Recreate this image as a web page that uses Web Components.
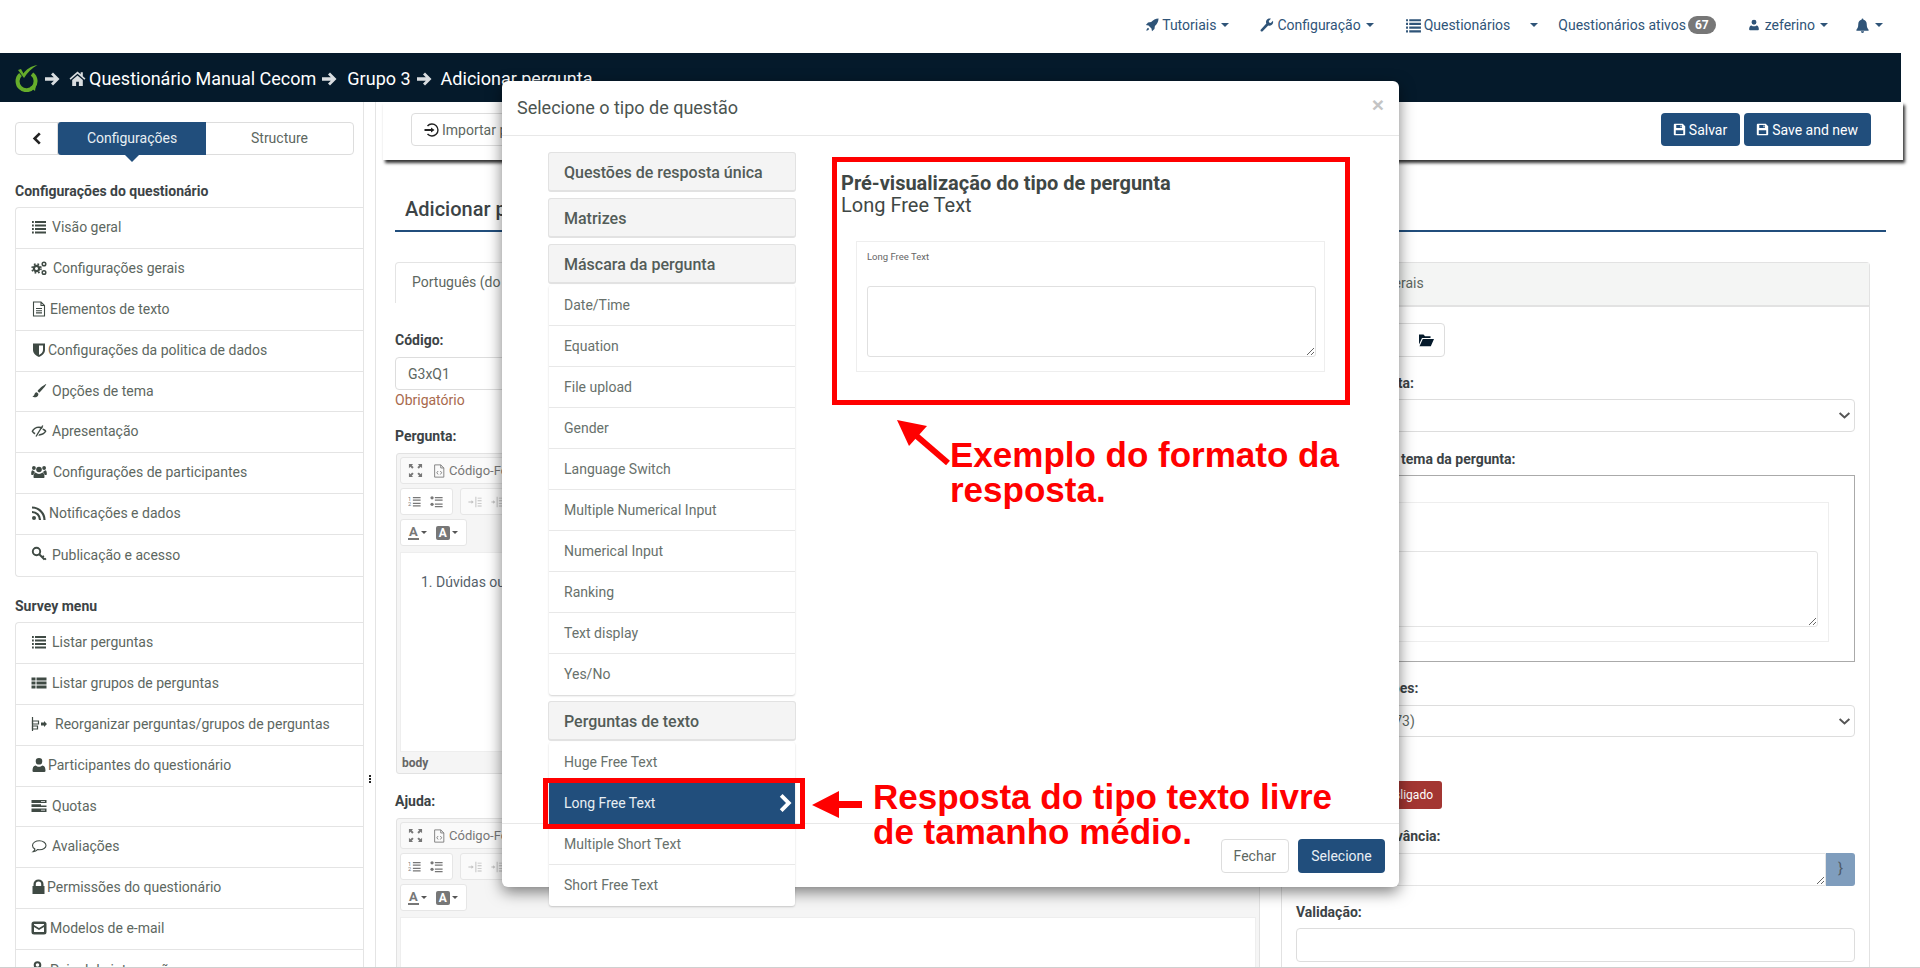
<!DOCTYPE html>
<html lang="pt"><head><meta charset="utf-8"><title>Adicionar pergunta</title>
<style>
html,body{margin:0;padding:0;background:#fff}
body{font:14px/20px Roboto,"Liberation Sans",sans-serif;color:#5d6761}
</style></head><body>
<app-shell>
  <top-nav>
    <nav-link icon="rocket" caret gap="0">Tutoriais</nav-link>
    <nav-link icon="wrench" caret gap="31">Configuração</nav-link>
    <nav-link icon="list" caret gap="31" cgap="20">Questionários</nav-link>
    <nav-link gap="20" badge="67">Questionários ativos</nav-link>
    <nav-link icon="user" caret gap="32">zeferino</nav-link>
    <nav-link icon="bell" caret gap="27"></nav-link>
  </top-nav>
  <crumb-bar></crumb-bar>
  <work-area>
    <side-nav slot="side">
      <menu-group heading="Configurações do questionário">
        <menu-row icon="list" tx="52">Visão geral</menu-row>
        <menu-row icon="cogs" tx="53">Configurações gerais</menu-row>
        <menu-row icon="file" tx="50">Elementos de texto</menu-row>
        <menu-row icon="shield" tx="48">Configurações da politica de dados</menu-row>
        <menu-row icon="brush" tx="52">Opções de tema</menu-row>
        <menu-row icon="eyeslash" tx="52">Apresentação</menu-row>
        <menu-row icon="users" tx="53">Configurações de participantes</menu-row>
        <menu-row icon="rss" tx="49">Notificações e dados</menu-row>
        <menu-row icon="key" tx="52">Publicação e acesso</menu-row>
      </menu-group>
      <menu-group heading="Survey menu">
        <menu-row icon="list" tx="52">Listar perguntas</menu-row>
        <menu-row icon="thlist" tx="52">Listar grupos de perguntas</menu-row>
        <menu-row icon="reorder" tx="55">Reorganizar perguntas/grupos de perguntas</menu-row>
        <menu-row icon="user" tx="48">Participantes do questionário</menu-row>
        <menu-row icon="quota" tx="52">Quotas</menu-row>
        <menu-row icon="comment" tx="52">Avaliações</menu-row>
        <menu-row icon="lock" tx="47">Permissões do questionário</menu-row>
        <menu-row icon="mailbox" tx="50">Modelos de e-mail</menu-row>
        <menu-row icon="pin" tx="50">Painel de integração</menu-row>
      </menu-group>
    </side-nav>
    <page-main slot="main">
      <form-left slot="left"></form-left>
      <form-right slot="right"></form-right>
    </page-main>
  </work-area>
  <type-dialog>
    <type-section title="Questões de resposta única"></type-section>
    <type-section title="Matrizes"></type-section>
    <type-section title="Máscara da pergunta">
      <type-item>Date/Time</type-item><type-item>Equation</type-item><type-item>File upload</type-item>
      <type-item>Gender</type-item><type-item>Language Switch</type-item><type-item>Multiple Numerical Input</type-item>
      <type-item>Numerical Input</type-item><type-item>Ranking</type-item><type-item>Text display</type-item><type-item>Yes/No</type-item>
    </type-section>
    <type-section title="Perguntas de texto">
      <type-item>Huge Free Text</type-item><type-item active>Long Free Text</type-item>
      <type-item>Multiple Short Text</type-item><type-item>Short Free Text</type-item>
    </type-section>
  </type-dialog>
  <note-layer></note-layer>
</app-shell>
<script>
const I={
rocket:'<path d="M15.5.5c-3.5.2-6.3 1.6-8.5 4.2L3.5 5.2 1 8l3 .6 3.4 3.4.6 3 2.8-2.5.5-3.5c2.6-2.2 4-5 4.2-8.5zM3.5 11.2c-1 .5-1.8 2-2 3.3 1.3-.2 2.8-1 3.3-2z"/>',
wrench:'<path d="M14.8 3.2 12.3 5.6 10.4 5.2 10 3.3 12.5.9C10.6.2 8.4.9 7.4 2.6 6.7 3.8 6.7 5.1 7.2 6.3L1 13c-.6.6-.6 1.4 0 2s1.4.6 2 0l6.4-6.5c1.2.5 2.6.4 3.7-.4 1.6-1 2.3-3 1.7-4.9z"/>',
list:'<path d="M1 2h1.8v2H1zM4 2h11v2H4zM1 5.5h1.8v2H1zM4 5.5h11v2H4zM1 9h1.8v2H1zM4 9h11v2H4zM1 12.5h1.8v2H1zM4 12.5h11v2H4z"/>',
thlist:'<path d="M.5 2.5h4v3h-4zM5.5 2.5h10v3h-10zM.5 6.500h4v3h-4zM5.5 6.500h10v3h-10zM.5 10.500h4v3h-4zM5.5 10.500h10v3h-10z"/>',
user:'<path d="M8 1a3.3 3.3 0 1 0 0 6.6A3.3 3.3 0 0 0 8 1zM2.5 15c-.8 0-1-.6-1-1.2 0-3 .9-5.3 3.2-5.3 1 .9 2 1.3 3.3 1.3s2.3-.4 3.3-1.3c2.3 0 3.2 2.3 3.2 5.3 0 .6-.2 1.2-1 1.2z"/>',
bell:'<path d="M8 .5c-.6 0-1 .4-1 1v.3C4.8 2.2 3.5 4 3.5 6.5c0 3.8-1 5-2 6v1h13v-1c-1-1-2-2.2-2-6 0-2.5-1.3-4.3-3.5-4.7v-.3c0-.6-.4-1-1-1zM6.3 14.2a1.7 1.7 0 0 0 3.4 0z"/>',
save:'<path fill-rule="evenodd" d="M2 1h10l3 3v10a1 1 0 0 1-1 1H2a1 1 0 0 1-1-1V2a1 1 0 0 1 1-1zm2 1.4V6h7V2.4zm5.2.6h1.2v2.2H9.2zM3.4 9v4.6h9.2V9z"/>',
home:'<path d="M8 1.5 .5 8l1 1.1L8 3.5l6.5 5.6 1-1.1L13 5.8V2h-2v2zM3 9.5V15h3.7v-4h2.6v4H13V9.5L8 5.2z"/>',
arrow:'<path d="M9 1.5 15.5 8 9 14.5 7 12.5 9.8 9.8H1V6.2h8.8L7 3.5z"/>',
chevl:'<path d="M10.5 1.5 12.5 3.5 8 8l4.500 4.500-2 2L4 8z"/>',
chevr:'<path d="M5.500 1.500 12 8l-6.500 6.500-2-2L8 8 3.500 3.500z"/>',
cogs:'<g fill="none" stroke="currentColor"><circle cx="5.500" cy="8.500" r="2.600" stroke-width="2.200"/><circle cx="5.500" cy="8.500" r="4.500" stroke-width="1.600" stroke-dasharray="1.700 1.900"/><circle cx="13" cy="4" r="1.800" stroke-width="1.500"/><circle cx="13" cy="12.500" r="1.800" stroke-width="1.500"/></g>',
file:'<g fill="none" stroke="currentColor" stroke-width="1.100"><path d="M2.500 1h7.500l3.500 3.500V15h-11zM10 1v3.500h3.500"/><path d="M5 7.500h6M5 9.700h6M5 11.900h6"/></g>',
shield:'<path fill-rule="evenodd" d="M2 1.500h12V8c0 3.500-3.500 6-6 7-2.500-1-6-3.500-6-7zM8 3.500V13c2-1 4-2.800 4-5V3.500z"/>',
brush:'<path d="M15.300 1c-2 .6-6.500 4-8.800 7l1.700 1.700C11 7 14.800 3 15.300 1zM5.800 9.200C4 9.400 3.500 10.800 3.200 12c-.2.8-.9 1.200-1.700 1.200 1 1.300 4 1.600 5.300-.2.700-1 .7-2 .4-2.400z"/>',
eyeslash:'<path d="M8 3.500C4.800 3.500 2 5.500.5 8.200c.7 1.300 1.700 2.400 3 3.200l1-1.300C3.400 9.600 2.700 9 2.200 8.200 3.400 6.400 5 5.200 7 5c1.500 0 2.800.3 3.800 1l1.200-1.500C10.800 3.800 9.500 3.500 8 3.500zM12.300 5.500l-1 1.200c1 .4 1.800 1 2.500 1.500C12.500 10 10.400 11 8.500 11l-1.300 1.600c3.400.4 6.700-1.600 8.300-4.400-.7-1.200-1.900-2.100-3.200-2.700z"/><path d="M11.800 2.500 5 13.500" stroke="currentColor" stroke-width="1.400"/>',
users:'<circle cx="8" cy="5.500" r="2.800"/><circle cx="2.900" cy="4" r="1.900"/><circle cx="13.100" cy="4" r="1.900"/><path d="M3.500 14c-.6 0-1-.4-1-1 0-2.200.8-4 2-4.400 1 .9 2.200 1.300 3.500 1.300s2.500-.4 3.500-1.300c1.200.4 2 2.200 2 4.400 0 .6-.4 1-1 1zM.2 9.500C.2 7.800.7 6.500 1.500 6.300c.5.400 1 .6 1.700.6.200.6.400 1 .8 1.400-.9.600-1.500 1.500-1.700 2.700H.9c-.4 0-.7-.2-.7-.5zM15.800 9.500c0-1.700-.5-3-1.300-3.200-.5.400-1 .6-1.700.6-.2.6-.4 1-.8 1.400.9.600 1.500 1.500 1.700 2.700h1.400c.4 0 .7-.2.7-.5z"/>',
rss:'<circle cx="3" cy="13" r="2"/><path d="M1 7a8 8 0 0 1 8 8M1 2.500A12.500 12.500 0 0 1 13.500 15" fill="none" stroke="currentColor" stroke-width="2.200"/>',
key:'<circle cx="5.500" cy="5.500" r="3.700" fill="none" stroke="currentColor" stroke-width="1.900"/><path d="M8 8l5.500 5.500M11 11l2-1M13.500 13.500l1.500-1" fill="none" stroke="currentColor" stroke-width="1.900"/>',
reorder:'<path d="M1.500 1v14" stroke="currentColor" stroke-width="1.200"/><g fill="none" stroke="currentColor" stroke-width="1.200"><path d="M1.500 5h6v3h-6zM1.500 10h5v3h-5z"/></g><path d="M10 6.500h3V5l3 3-3 3V9.500h-3z"/>',
quota:'<path d="M.5 2h15v3h-15zM.5 6.200h9.500v1.200h5.500v1.700H.5zM.5 10.400h15V14h-15z"/><path d="M10 3.300h4v.600h-4zM10 11.700h4v.700h-4z" fill="#fff"/>',
comment:'<path d="M8.500 2.800c-4 0-7 2-7 4.700 0 1.500 1 2.800 2.400 3.600-.1.800-.7 1.700-1.700 2.500 1.700-.2 3.300-.9 4.300-2 .7.100 1.300.2 2 .2 3.700 0 6.500-2 6.500-4.300s-2.800-4.700-6.500-4.700z" fill="none" stroke="currentColor" stroke-width="1.100"/>',
lock:'<path fill-rule="evenodd" d="M2.500 7V5a5 4.500 0 0 1 10 0v2h1v8h-12V7zm2.300 0h5.400V5a2.700 2.500 0 0 0-5.400 0z"/>',
mailbox:'<path fill-rule="evenodd" d="M3 1.500h10A2.500 2.500 0 0 1 15.500 4v8a2.500 2.500 0 0 1-2.500 2.500H3A2.500 2.500 0 0 1 .5 12V4A2.500 2.500 0 0 1 3 1.500zM3 4v1l5 3 5-3V4zm0 3v5h10V7L8 10z"/>',
pin:'<circle cx="6.500" cy="4" r="2.800" fill="none" stroke="currentColor" stroke-width="2"/><path d="M6.500 7v8" stroke="currentColor" stroke-width="2"/>',
folder:'<path d="M1 2.500h4.500L7 4.200h5.500V6H4L1 12.500zM4.800 7H16l-3.200 7.300H1.500z"/>',
enter:'<path d="M7 5.500 10.500 8 7 10.500V9H.5V7H7z"/><path d="M3.500 4A6 6 0 1 1 3.500 12" fill="none" stroke="currentColor" stroke-width="1.400"/>',
expand:'<path d="M1 1h4.500L4 2.500 6 4.500 4.500 6l-2-2L1 5.500zM15 1v4.500L13.500 4l-2 2L10 4.500l2-2L10.500 1zM1 15v-4.500L2.500 12l2-2L6 11.500l-2 2L5.500 15zM15 15h-4.500L12 13.500l-2-2 1.500-1.500 2 2 1.500-1.500z"/>',
source:'<g fill="none" stroke="currentColor" stroke-width="1"><path d="M3 1h7l3.500 3.500V15H3zM10 1v3.500h3.500"/><path d="M7 8 5.500 10 7 12M9.500 8l1.500 2-1.500 2"/></g>',
ol:'<text x="0" y="7" font-size="7" font-family="Roboto">1</text><text x="0" y="14" font-size="7" font-family="Roboto">2</text><path d="M6 2.500h9.500v1.500H6zM6 5.500h9.500V7H6zM6 9.500h9.500V11H6zM6 12.500h9.500V14H6z"/>',
ul:'<circle cx="2.500" cy="3.500" r="2"/><circle cx="2.500" cy="11.500" r="2"/><path d="M6 2.500h9.500v1.500H6zM6 5.500h9.500V7H6zM6 10.500h9.500V12H6zM6 13.500h9.500V15H6z"/>',
outdent:'<path d="M8.500 2v12h1V2zM11 3h4.500v1H11zM11 6h4.500v1H11zM11 9h4.500v1H11zM11 12h4.500v1H11zM6.500 8 4 6v1.500H.5v1H4V10z"/>',
indent:'<path d="M6.500 2v12h1V2zM9 3h6.500v1H9zM9 6h6.500v1H9zM9 9h6.500v1H9zM9 12h6.500v1H9zM5 8 2.500 6v1.500H.5v1h2V10z"/>',
chevdown:'<path d="M2 5 8 10.500 14 5" fill="none" stroke="currentColor" stroke-width="2.400"/>'
};
function def(name,css,html){
  customElements.define(name,class extends HTMLElement{
    connectedCallback(){
      if(this.shadowRoot)return;
      const r=this.attachShadow({mode:'open'});
      r.innerHTML='<style>'+css+'</style>'+(typeof html==='function'?html(this):html);
    }
  });
}
def('ls-icon',':host{display:inline-flex;flex:none;vertical-align:middle}svg{display:block;fill:currentColor}',
 e=>{const s=e.getAttribute('size')||14;return `<svg width="${s}" height="${s}" viewBox="0 0 16 16">${I[e.getAttribute('name')]||''}</svg>`});
def('app-shell',':host{display:block;position:relative;width:1920px;height:968px;overflow:hidden;background:#fff}'+
 '.b{position:absolute;left:0;right:0;bottom:0;height:1px;background:#cfcfcf;z-index:50}','<slot></slot><div class="b"></div>');
def('top-nav',':host{display:flex;justify-content:flex-end;align-items:center;height:53px;padding:0 37px 3px 0;box-sizing:border-box;color:#2f5478}','<slot></slot>');
def('nav-link',':host{display:inline-flex;align-items:center;white-space:nowrap}'+
 '.c{width:0;height:0;border:4px solid transparent;border-top-color:currentColor;border-bottom:0}'+
 '.bd{background:#777;color:#fff;font-weight:700;font-size:12px;line-height:18px;border-radius:9px;padding:0 7px;margin-left:2px}',
 e=>{const g=e.getAttribute('gap')||0,ic=e.getAttribute('icon'),cg=e.getAttribute('cgap')||5,b=e.getAttribute('badge');
 e.style.marginLeft=g+'px';
 const sz=ic==='list'?17:ic==='user'?12:ic==='bell'?15:14;
 return (ic?`<ls-icon name="${ic}" size="${sz}"></ls-icon>`:'')+`<span style="margin-left:${ic==='user'?5:ic==='wrench'?3:ic==='list'?2:ic==='bell'?0:ic?3:0}px"><slot></slot></span>`+
 (b?`<span class="bd">${b}</span>`:'')+(e.hasAttribute('caret')?`<span class="c" style="margin-left:${cg}px"></span>`:'')});
def('crumb-bar',':host{display:flex;align-items:center;height:49px;width:1901px;background:#051a2b;color:#fff;font-size:18px;box-sizing:border-box;padding:2px 0 0 15px;white-space:nowrap}'+
 'ls-icon{color:#d9dde0}.l{margin-right:6px}.a1{margin:0 9px 0 0}.t{margin-left:3px}.a2{margin:0 10px 0 5px}',
 `<svg class="l" width="23" height="27" viewBox="0 0 23 27"><g fill="none" stroke="#66ad2b" stroke-width="4"><path d="M5.500 9.500A9 9 0 1 0 17 9"/></g><path d="M3 5l3-1 2.500 4.500C11 4.500 16 1 22.500 0 17 3 12.500 7.500 9 13z" fill="#66ad2b"/><path d="M15 22l6-2-1 6z" fill="#66ad2b"/></svg>
 <ls-icon class="a1" name="arrow" size="16"></ls-icon><ls-icon name="home" size="17"></ls-icon><span class="t">Questionário Manual Cecom</span>
 <ls-icon class="a2" name="arrow" size="16"></ls-icon><span>Grupo 3</span><ls-icon class="a2" name="arrow" size="16" style="margin-right:9px"></ls-icon><span>Adicionar pergunta</span>`);
def('work-area',':host{display:flex;height:866px;overflow:hidden}'+
 '.split{width:13px;flex:none;border-left:1px solid #e4e4e4;border-right:1px solid #e4e4e4;display:flex;flex-direction:column;align-items:center;padding-top:673px;box-sizing:border-box;gap:1px}'+
 '.split i{display:block;width:2px;height:2px;background:#222}',
 '<slot name="side"></slot><div class="split"><i></i><i></i><i></i></div><slot name="main"></slot>');
def('side-nav',':host{display:block;width:363px;flex:none;box-sizing:border-box;padding:20px 0 0 15px;overflow:hidden}'+
 '.tabs{display:flex;width:339px;height:33px;box-sizing:border-box;border:1px solid #ddd;border-radius:4px;position:relative;text-align:center;line-height:31px;margin-bottom:26px}'+
 '.back{width:41px;border-right:1px solid #ddd;color:#222;display:flex;align-items:center;justify-content:center}'+
 '.on{width:148px;margin:-1px 0;height:33px;line-height:32px;background:#214e7c;color:#e8eef3;border-radius:3px 0 0 3px;position:relative}'+
 '.on:after{content:"";position:absolute;left:67px;top:33px;border:7px solid transparent;border-top-color:#214e7c;border-bottom:0}'+
 '.st{flex:1}',
 `<div class="tabs"><div class="back"><ls-icon name="chevl" size="15"></ls-icon></div><div class="on">Configurações</div><div class="st">Structure</div></div><slot></slot>`);
def('menu-group',':host{display:block}.h{font-weight:700;color:#3c4346;line-height:20px;height:20px;margin-bottom:6px}'+
 '.l{border:1px solid #e4e4e4;border-right:0;border-radius:4px 0 0 4px;margin-bottom:19px}',
 e=>`<div class="h">${e.getAttribute('heading')}</div><div class="l"><slot></slot></div>`);
def('menu-row',':host{display:flex;align-items:center;height:40.9px;box-sizing:border-box;border-bottom:1px solid #e4e4e4;white-space:nowrap;color:#5d6761;position:relative}'+
 ':host(:last-child){border-bottom:0}ls-icon{color:#3f4a44;position:absolute;left:15px;top:11px}',
 e=>`<ls-icon name="${e.getAttribute('icon')}" size="16"></ls-icon><span style="margin-left:${e.getAttribute('tx')-16}px;margin-top:-2px"><slot></slot></span>`);
def('page-main',':host{display:block;flex:1;min-width:0}'+
 '.bar{height:58px;margin:0 17px 0 7px;display:flex;align-items:center;box-shadow:2px 3px 3px rgba(0,0,0,.8);background:#fff;padding:0 32px 3px 28px;box-sizing:border-box;gap:4px}'+
 '.imp{height:33px;box-sizing:border-box;border:1px solid #ddd;border-radius:4px;padding:0 12px;display:flex;align-items:center;gap:2px;color:#5d6761;margin-right:auto;white-space:nowrap}'+
 '.imp ls-icon{color:#222}'+
 '.btn{height:33px;box-sizing:border-box;background:#214e7c;color:#fff;border-radius:4px;padding:0 13px 0 12px;display:flex;align-items:center;gap:3px;white-space:nowrap}'+
 '.title{margin:0 34px 0 19px;height:72px;box-sizing:border-box;border-bottom:2px solid #214e7c;padding:36px 0 0 10px;font-size:20px;line-height:26px;font-weight:500;color:#3c4346;white-space:nowrap}'+
 '.cols{display:flex;gap:20px;margin:30px 0 0 19px;align-items:flex-start}',
 `<div class="bar"><div class="imp"><ls-icon name="enter" size="16"></ls-icon>Importar p</div><div class="btn"><ls-icon name="save" size="13"></ls-icon>Salvar</div><div class="btn"><ls-icon name="save" size="13"></ls-icon>Save and new</div></div>
 <div class="title">Adicionar p</div><div class="cols"><slot name="left"></slot><slot name="right"></slot></div>`);
const lab='.lb{font-weight:700;color:#3c4346;line-height:20px;height:20px;white-space:nowrap}';
def('form-left',':host{display:block;width:866px;flex:none}'+lab+
 '.tab{width:190px;height:41px;box-sizing:border-box;border:1px solid #e4e4e4;border-bottom:0;border-radius:4px 4px 0 0;padding:9px 0 0 16px}'+
 '.in{height:33px;box-sizing:border-box;border:1px solid #ddd;border-radius:4px;padding:0 12px;line-height:32px;margin-top:7px}'+
 '.err{color:#a8694d;height:20px}',
 `<div class="tab">Português (do Brasil)</div>
 <div class="lb" style="margin-top:27px">Código:</div><div class="in">G3xQ1</div><div class="err">Obrigatório</div>
 <div class="lb" style="margin-top:16px">Pergunta:</div><rich-editor style="margin-top:7px" text="1. Dúvidas ou" h="200"></rich-editor>
 <div class="lb" style="margin-top:17px">Ajuda:</div><rich-editor style="margin-top:7px" h="200"></rich-editor>`);
def('rich-editor',':host{display:block;margin-left:1px;width:864px;box-sizing:border-box;background:#f5f5f5;border:1px solid #e2e2e2;border-radius:3px;padding:3px 3px 2px}'+
 '.r{display:flex;gap:7px;height:27px;margin-bottom:4px}.r.m{margin-bottom:6px}'+
 '.g{display:flex;align-items:center;gap:9px;box-sizing:border-box;height:27px;border:1px solid #e6e6e6;border-radius:3px;background:#fff;padding:0 7px;color:#777;white-space:nowrap;font-size:13px}'+
 '.g.w{background:#fafafa;flex:1}.g .d{opacity:.45}'+
 '.fa{font-weight:700;font-size:13px;line-height:13px;border-bottom:2px solid #777;padding:0 1px}.bg{background:#777;color:#fff;font-weight:700;font-size:12px;line-height:14px;padding:0 3px;border-radius:2px}'+
 '.cr{width:0;height:0;border:3px solid transparent;border-top-color:#555;border-bottom:0;margin-left:-7px}'+
 '.c{background:#fff;border:1px solid #eee;box-sizing:border-box;padding:19px 0 0 20px;color:#55616a}'+
 '.ft{font-weight:700;font-size:12px;color:#666;height:19px;line-height:22px;padding-left:2px}',
 e=>`<div class="r"><div class="g w"><ls-icon name="expand" size="15"></ls-icon><ls-icon name="source" size="14"></ls-icon><span style="margin-left:-6px">Código-Fonte</span></div></div>
 <div class="r"><div class="g" style="width:53px"><ls-icon name="ol" size="13"></ls-icon><ls-icon name="ul" size="13"></ls-icon></div><div class="g w"><ls-icon class="d" name="outdent" size="14"></ls-icon><ls-icon class="d" name="indent" size="14"></ls-icon></div></div>
 <div class="r m"><div class="g" style="width:67px"><span class="fa">A</span><span class="cr"></span><span class="bg">A</span><span class="cr"></span></div></div>
 <div class="c" style="height:${e.getAttribute('h')}px">${e.getAttribute('text')||''}</div><div class="ft">body</div>`);
def('form-right',':host{display:block;width:589px;flex:none;box-sizing:border-box;border:1px solid #e2e2e2;border-bottom:0;border-radius:4px 4px 0 0;height:720px}'+lab+
 '.hd{height:44px;background:#f4f5f4;border-bottom:2px solid #e2e2e2;box-sizing:border-box;padding:10px;color:#5d6761}'+
 '.bd{padding:16px 14px}.tb{display:flex;width:149px;height:34px;box-sizing:border-box;border:1px solid #ddd;border-radius:4px;align-items:center;justify-content:flex-end;padding-right:10px;color:#051a2b}'+
 '.sel{height:33px;box-sizing:border-box;border:1px solid #ddd;border-radius:4px;display:flex;align-items:center;justify-content:space-between;padding:0 3px 0 12px;margin-top:6px}.sel ls-icon{color:#555}'+
 '.pv{margin-top:6px;height:187px;box-sizing:border-box;border:1px solid #aaa;padding:26px 25px 0 35px}'+
 '.pc{height:140px;box-sizing:border-box;border:1px solid #eee;padding:48px 10px 0 10px;font-size:10px;line-height:14px;position:relative}'+
 'textarea{display:block;box-sizing:border-box;width:100%;border:1px solid #e4e4e4;border-radius:3px;outline:0;background:#fff;font:inherit;resize:vertical}'+
 '.tgl{margin:44px 0 0 0;width:146px;height:28px;box-sizing:border-box;background:#a33632;border-radius:3px;color:#fff;font-size:12px;line-height:28px;text-align:right;padding-right:9px}'+
 '.ta{display:flex;margin-top:7px;height:33px}.ta textarea{flex:1;height:33px;border-radius:3px 0 0 3px}.ad{width:29px;background:#7f9dbd;color:#4f5a66;text-align:center;line-height:31px;border-radius:0 3px 3px 0;font-size:15px}'+
 '.inp{margin-top:6px;height:34px;box-sizing:border-box;border:1px solid #ddd;border-radius:4px}',
 `<div class="hd">Configurações gerais</div><div class="bd">
 <div class="tb"><ls-icon name="folder" size="16"></ls-icon></div>
 <div class="lb" style="margin-top:16px">Tipos de pergunta:</div><div class="sel"><span></span><ls-icon name="chevdown" size="13"></ls-icon></div>
 <div class="lb" style="margin-top:17px;padding-left:105px">tema da pergunta:</div>
 <div class="pv"><div class="pc"><textarea style="height:76px"></textarea></div></div>
 <div class="lb" style="margin-top:16px">Grupo de questões:</div><div class="sel" style="height:32px;margin-top:7px"><span>Grupo 3 (ID: 773)</span><ls-icon name="chevdown" size="13"></ls-icon></div>
 <div class="tgl">Desligado</div>
 <div class="lb" style="margin-top:17px">Equação de relevância:</div><div class="ta"><textarea></textarea><div class="ad">}</div></div>
 <div class="lb" style="margin-top:16px">Validação:</div><div class="inp"></div></div>`);
def('type-dialog',':host{display:flex;flex-direction:column;position:absolute;left:502px;top:81px;width:897px;height:806px;background:#fff;border-radius:6px;box-shadow:0 5px 15px rgba(0,0,0,.5);z-index:10}'+
 '.hd{height:55px;flex:none;box-sizing:border-box;border-bottom:1px solid #e8e8e8;display:flex;align-items:center;justify-content:space-between;padding:0 15px;font-size:18px;color:#4b5450}'+
 '.x{font-size:21px;font-weight:700;color:#c4c4c4;font-family:"Liberation Sans",sans-serif;margin-top:-7px}'+
 '.bd{flex:1;min-height:0;display:flex;padding:16px 0 0 46px;position:relative;z-index:2}'+
 '.ac{width:248px;flex:none}.pv{margin-left:45px;padding-top:20px;font-size:20px;line-height:22px;color:#3f4745}'+
 '.pv b{display:block;font-weight:700;color:#3f4745;font-size:20px}'+
 '.cd{margin:25px 0 0 15px;width:469px;height:131px;box-sizing:border-box;border:1px solid #eee;padding:8px 10px 0 10px;font-size:9.500px;line-height:14px;color:#666}'+
 'textarea{display:block;box-sizing:border-box;width:449px;height:71px;margin-top:22px;border:1px solid #e0e0e0;border-radius:3px;outline:0;background:#fff;resize:vertical}'+
 '.ft{height:64px;flex:none;box-sizing:border-box;border-top:1px solid #e8e8e8;display:flex;justify-content:flex-end;align-items:center;gap:9px;padding:0 14px 0 0}'+
 '.f{height:34px;box-sizing:border-box;border:1px solid #ddd;border-radius:4px;padding:0 12px;line-height:32px;color:#5d6761}.s{height:34px;width:87px;text-align:center;box-sizing:border-box;background:#214e7c;color:#e9eff5;border-radius:4px;line-height:34px}',
 `<div class="hd"><span>Selecione o tipo de questão</span><span class="x">×</span></div>
 <div class="bd"><div class="ac"><slot></slot></div>
 <div class="pv"><b>Pré-visualização do tipo de pergunta</b>Long Free Text<div class="cd">Long Free Text<textarea></textarea></div></div></div>
 <div class="ft"><span class="f">Fechar</span><span class="s">Selecione</span></div>`);
def('type-section',':host{display:block;margin-bottom:6px}'+
 '.h{height:40px;box-sizing:border-box;background:#f4f4f4;border:1px solid #e2e2e2;border-bottom-width:2px;border-radius:3px;padding:0 15px;font-size:16px;font-weight:500;line-height:39px;color:#535c58;white-space:nowrap}'+
 '.l{background:#fff;margin:1px 1px 0;border-radius:3px;box-shadow:0 1px 2px rgba(0,0,0,.18)}',
 e=>`<div class="h">${e.getAttribute('title')}</div>${e.children.length?'<div class="l"><slot></slot></div>':''}`);
def('type-item',':host{display:flex;align-items:center;justify-content:space-between;height:41px;box-sizing:border-box;border-bottom:1px solid #e8e8e8;padding:0 0 1px 15px;color:#68716c;white-space:nowrap}'+
 ':host(:last-child){border-bottom:0}:host([active]){background:#214e7c;color:#e8eef3;border-bottom:0}ls-icon{color:#fff;margin-right:-2px}',
 e=>`<span><slot></slot></span>${e.hasAttribute('active')?'<ls-icon name="chevr" size="22"></ls-icon>':''}`);
def('note-layer',':host{display:block;position:absolute;left:0;top:0;width:1920px;height:968px;pointer-events:none;z-index:20}'+
 '.box{position:absolute;box-sizing:border-box;border:5px solid #f00}'+
 '.t{position:absolute;color:#f00;font:700 35px/35px "Liberation Sans",Arial,sans-serif;white-space:nowrap}'+
 'svg{position:absolute;left:0;top:0}',
 `<div class="box" style="left:832px;top:157px;width:518px;height:248px"></div>
 <div class="box" style="left:543px;top:778px;width:262px;height:51px"></div>
 <svg width="1920" height="968"><path d="M948 463 912 432" stroke="#f00" stroke-width="6" fill="none"/><path d="M897 420 927 426 909 446z" fill="#f00"/>
 <path d="M812 805 839 791V801H862V808H839V818z" fill="#f00"/></svg>
 <div class="t" style="left:950px;top:437px">Exemplo do formato da<br>resposta.</div>
 <div class="t" style="left:873px;top:779px">Resposta do tipo texto livre<br>de tamanho médio.</div>`);
</script>
</body></html>
